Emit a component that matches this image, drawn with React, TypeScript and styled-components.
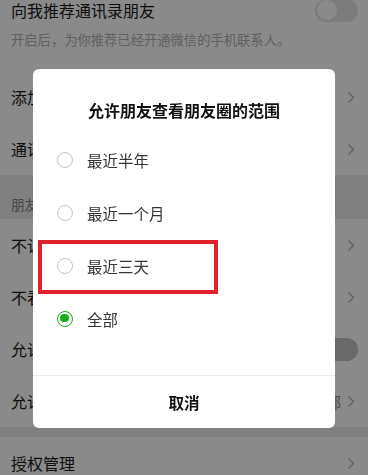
import React from 'react'
import styled, { createGlobalStyle } from 'styled-components'

const GlobalStyle = createGlobalStyle`
  html, body {
    margin: 0;
    padding: 0;
    background: #ffffff;
  }
  body {
    font-family: "Noto Sans CJK SC", "Noto Sans", sans-serif;
    -webkit-font-smoothing: antialiased;
  }
  * { box-sizing: border-box; }
`

const options = ['最近半年', '最近一个月', '最近三天', '全部']

const Chevron = () => (
  <svg width="8" height="13" viewBox="0 0 8 13">
    <polyline points="1.5,1.5 6.5,6.5 1.5,11.5" fill="none" stroke="#b2b2b2" strokeWidth="1.3" />
  </svg>
)

const App = () => (
  <>
    <GlobalStyle />
    <Page>
      <TopBlock>
        <TitleRow>
          <RowLabel>向我推荐通讯录朋友</RowLabel>
          <Toggle />
        </TitleRow>
        <Hint>开启后，为你推荐已经开通微信的手机联系人。</Hint>
      </TopBlock>
      <Row>
        <RowLabel>添加我的方式</RowLabel>
        <Chevron />
      </Row>
      <Row>
        <RowLabel>通讯录黑名单</RowLabel>
        <Chevron />
      </Row>
      <SectionHeader>朋友圈</SectionHeader>
      <Row>
        <RowLabel>不让他（她）看</RowLabel>
        <Chevron />
      </Row>
      <Row>
        <RowLabel>不看他（她）</RowLabel>
        <Chevron />
      </Row>
      <Row>
        <RowLabel>允许陌生人查看十条朋友圈</RowLabel>
        <Toggle $filled />
      </Row>
      <Row>
        <RowLabel>允许朋友查看朋友圈的范围</RowLabel>
        <RowEnd>
          <RowValue>全部</RowValue>
          <Chevron />
        </RowEnd>
      </Row>
      <Gap />
      <Row>
        <RowLabel>授权管理</RowLabel>
        <Chevron />
      </Row>
    </Page>

    <Overlay>
      <Dialog>
        <DialogTitle>允许朋友查看朋友圈的范围</DialogTitle>
        <OptionList>
          {options.map((label) => (
            <Option key={label}>
              <Radio $checked={label === '全部'} />
              <OptionText>{label}</OptionText>
              {label === '最近三天' && <Highlight />}
            </Option>
          ))}
        </OptionList>
        <CancelButton>取消</CancelButton>
      </Dialog>
    </Overlay>
  </>
)

export default App

const Page = styled.div`
  width: 368px;
  background: #ffffff;
  color: #191919;
`
const TopBlock = styled.div`
  padding: 0 10px 21px 11px;
`
const TitleRow = styled.div`
  display: flex;
  align-items: center;
  justify-content: space-between;
  height: 20px;
`
const RowLabel = styled.span`
  font-size: 16px;
  line-height: 20px;
  color: #191919;
  white-space: nowrap;
`
const Hint = styled.div`
  margin-top: 10px;
  font-size: 13.3px;
  line-height: 20px;
  color: #b2b2b2;
  white-space: nowrap;
`
const Toggle = styled.div<{ $filled?: boolean }>`
  position: relative;
  width: 43px;
  height: 23px;
  border-radius: 12px;
  flex-shrink: 0;
  background: ${p => (p.$filled ? '#c2c2c2' : '#e6e6e6')};
  &::after {
    content: '';
    position: absolute;
    top: 1.5px;
    left: 1.5px;
    width: 20px;
    height: 20px;
    border-radius: 50%;
    background: #ffffff;
    display: ${p => (p.$filled ? 'none' : 'block')};
  }
`
const Row = styled.div`
  display: flex;
  align-items: center;
  justify-content: space-between;
  height: 52px;
  padding: 0 10px 0 11px;
  svg {
    margin-right: 3px;
  }
`
const RowEnd = styled.div`
  display: flex;
  align-items: center;
  gap: 6px;
`
const RowValue = styled.span`
  font-size: 15px;
  color: #888888;
`
const SectionHeader = styled.div`
  display: flex;
  align-items: flex-end;
  height: 44px;
  padding: 0 11px 5px;
  background: #ededed;
  font-size: 13.5px;
  line-height: 20px;
  color: #7f7f7f;
`
const Gap = styled.div`
  height: 10px;
  background: #ededed;
`
const Overlay = styled.div`
  position: fixed;
  inset: 0;
  background: rgba(0, 0, 0, 0.46);
  display: flex;
  justify-content: center;
  align-items: flex-start;
  padding-top: 69px;
`
const Dialog = styled.div`
  width: 302px;
  background: #ffffff;
  border-radius: 6px;
  overflow: hidden;
  display: flex;
  flex-direction: column;
`
const DialogTitle = styled.div`
  padding-top: 29px;
  font-size: 16px;
  line-height: 24px;
  font-weight: 700;
  text-align: center;
  color: #111111;
`
const OptionList = styled.div`
  display: flex;
  flex-direction: column;
  padding: 11px 0 30px;
`
const Option = styled.div`
  position: relative;
  display: flex;
  align-items: center;
  height: 53px;
  padding-left: 24px;
  gap: 14px;
`
const Radio = styled.span<{ $checked?: boolean }>`
  position: relative;
  width: 16px;
  height: 16px;
  border-radius: 50%;
  flex-shrink: 0;
  border: ${p => (p.$checked ? '1.6px solid #1aad19' : '1.4px solid #c4c4c4')};
  &::after {
    content: '';
    position: absolute;
    top: 2.2px;
    left: 2.2px;
    width: 8.5px;
    height: 8.5px;
    border-radius: 50%;
    background: #1aad19;
    display: ${p => (p.$checked ? 'block' : 'none')};
  }
`
const OptionText = styled.span`
  font-size: 15.5px;
  line-height: 22px;
  color: #353535;
`
const Highlight = styled.div`
  position: absolute;
  left: 5px;
  top: 1px;
  width: 180px;
  height: 54px;
  border: 4px solid #e0222c;
  pointer-events: none;
`
const CancelButton = styled.div`
  height: 53px;
  display: flex;
  align-items: center;
  justify-content: center;
  border-top: 1px solid #ededed;
  font-size: 15.5px;
  font-weight: 700;
  color: #111111;
`
